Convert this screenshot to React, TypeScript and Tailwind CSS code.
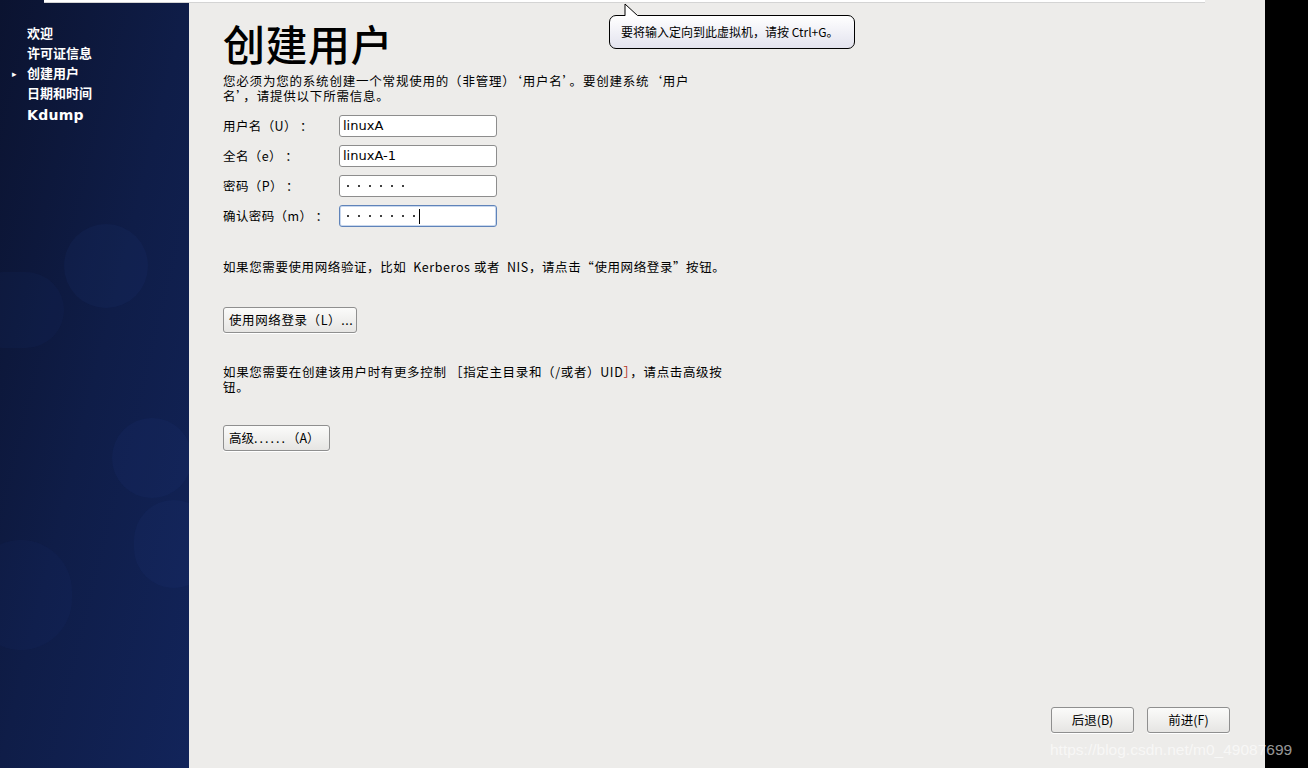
import React from "react";

const cjk = { fontFamily: '"DejaVu Sans", "Noto Sans CJK SC", sans-serif' };
const cjkFirst = { fontFamily: '"Noto Sans CJK SC", "DejaVu Sans", sans-serif' };

function Field({ label, value, focused }: { label: string; value: React.ReactNode; focused?: boolean }) {
  return (
    <div className="flex items-center h-[22px]">
      <div className="w-[116px] text-[12.5px] text-black whitespace-pre tracking-[0.4px]" style={cjkFirst}>{label}</div>
      <div
        className={
          "w-[158px] h-[22px] rounded-[3px] bg-white flex items-center pl-[3px] text-[13px] text-black " +
          (focused ? "border border-[#5f83b9] shadow-[inset_0_0_0_1px_#c9d8ee]" : "border border-[#8d8d8d]")
        }
      >
        {value}
      </div>
    </div>
  );
}

function Dots({ n, caret }: { n: number; caret?: boolean }) {
  return (
    <div className="flex items-center gap-[9px] pl-[4px]">
      {Array.from({ length: n }).map((_, i) => (
        <span key={i} className="w-[2px] h-[2px] bg-black rounded-full" />
      ))}
      {caret && <span className="w-[1px] h-[15px] bg-black -ml-[5px]" />}
    </div>
  );
}

function Btn({ children, className = "" }: { children: React.ReactNode; className?: string }) {
  return (
    <div
      className={
        "h-[26px] rounded-[3px] border border-[#8f8f8f] bg-gradient-to-b from-[#fbfbfa] to-[#e6e5e3] flex items-center text-[12.5px] text-black shadow-[0_1px_0_#ffffff] whitespace-nowrap " +
        className
      }
      style={cjkFirst}
    >
      {children}
    </div>
  );
}

export default function App() {
  return (
    <div className="w-[1308px] h-[768px] flex bg-black relative overflow-hidden" style={cjk}>
      {/* sidebar */}
      <div className="w-[189px] h-full relative overflow-hidden bg-gradient-to-br from-[#0b1330] via-[#0f1d48] to-[#12245a]">
        <div className="absolute left-[64px] top-[224px] w-[84px] h-[84px] rounded-full bg-[#2a4290]/10" />
        <div className="absolute left-[-34px] top-[272px] w-[98px] h-[76px] rounded-full bg-[#2a4290]/8" />
        <div className="absolute left-[112px] top-[418px] w-[80px] h-[80px] rounded-full bg-[#2a4290]/10" />
        <div className="absolute left-[134px] top-[500px] w-[80px] h-[88px] rounded-full bg-[#2a4290]/10" />
        <div className="absolute left-[-30px] top-[540px] w-[102px] h-[110px] rounded-full bg-[#2a4290]/8" />
        <div className="relative pt-[24px] pl-[27px] flex flex-col text-white font-bold text-[13px] leading-[20px]">
          <div>欢迎</div>
          <div>许可证信息</div>
          <div className="relative">
            <span className="absolute -left-[15px] top-0 text-[9px]">▸</span>创建用户
          </div>
          <div>日期和时间</div>
          <div className="mt-[1px] text-[14px] tracking-[0.3px]">Kdump</div>
        </div>
      </div>

      {/* main */}
      <div className="w-[1076px] h-full bg-[#edecea] relative">
        <div className="pl-[34px] pt-[16px]">
          <div className="text-[42px] leading-[54px] text-black font-medium tracking-[0.5px]" style={{ fontFamily: '"Noto Sans CJK SC", sans-serif' }}>
            创建用户
          </div>
          <div className="mt-[3px] text-[12.5px] leading-[15px] text-black whitespace-nowrap tracking-[0.8px]" style={cjkFirst}>
            您必须为您的系统创建一个常规使用的（非管理）‘用户名’。要创建系统‘用户<br />名’，请提供以下所需信息。
          </div>
          <div className="mt-[12px] flex flex-col gap-[8px]">
            <Field label="用户名（U） ：" value="linuxA" />
            <Field label="全名（e） ：" value="linuxA-1" />
            <Field label="密码（P） ：" value={<Dots n={6} />} />
            <Field label="确认密码（m） ：" value={<Dots n={7} caret />} focused />
          </div>
          <div className="mt-[32px] text-[12.5px] leading-[16px] text-black whitespace-pre tracking-[0.6px]" style={cjkFirst}>
            如果您需要使用网络验证，比如  Kerberos 或者  NIS，请点击“使用网络登录”按钮。
          </div>
          <div className="mt-[32px]">
            <Btn className="w-[134px] pl-[5px] tracking-[0.6px]">使用网络登录（L）...</Btn>
          </div>
          <div className="mt-[31px] text-[12.5px] leading-[15px] text-black whitespace-nowrap tracking-[0.65px]" style={cjkFirst}>
            如果您需要在创建该用户时有更多控制 ［指定主目录和（/或者）UID<span className="text-[#b0311e]">］</span>，请点击高级按<br />钮。
          </div>
          <div className="mt-[31px]">
            <Btn className="w-[107px] pl-[5px]">
              高级<span className="tracking-[2px]">......</span>（A）
            </Btn>
          </div>
        </div>

        <div className="absolute right-[35px] bottom-[35px] flex gap-[13px]">
          <Btn className="w-[83px] justify-center">后退(B)</Btn>
          <Btn className="w-[83px] justify-center">前进(F)</Btn>
        </div>

        {/* tooltip */}
        <div className="absolute left-[420px] top-[15px] w-[246px] h-[34px] rounded-[7px] border border-black bg-gradient-to-b from-white to-[#e3e3ee] flex items-center pl-[11px] text-[12px] text-black whitespace-nowrap" style={cjkFirst}>
          要将输入定向到此虚拟机，请按 Ctrl+G。
        </div>
        <svg className="absolute left-[430px] top-[3px]" width="24" height="14" viewBox="0 0 24 14">
          <path d="M6 13 L6 1 L19 13" fill="#ffffff" stroke="#000" strokeWidth="1" />
          <rect x="6.5" y="12.5" width="12" height="2" fill="#ffffff" />
        </svg>
      </div>

      {/* top white bar */}
      <div className="absolute left-[44px] top-0 w-[1161px] h-[3px] bg-white border-b border-[#d4d4d4]" />

      {/* watermark */}
      <div className="absolute left-[1050px] top-[738px] text-[15.5px] text-white/60 whitespace-nowrap" style={{ fontFamily: '"Liberation Sans", sans-serif' }}>
        https://blog.csdn.net/m0_49087699
      </div>
    </div>
  );
}
